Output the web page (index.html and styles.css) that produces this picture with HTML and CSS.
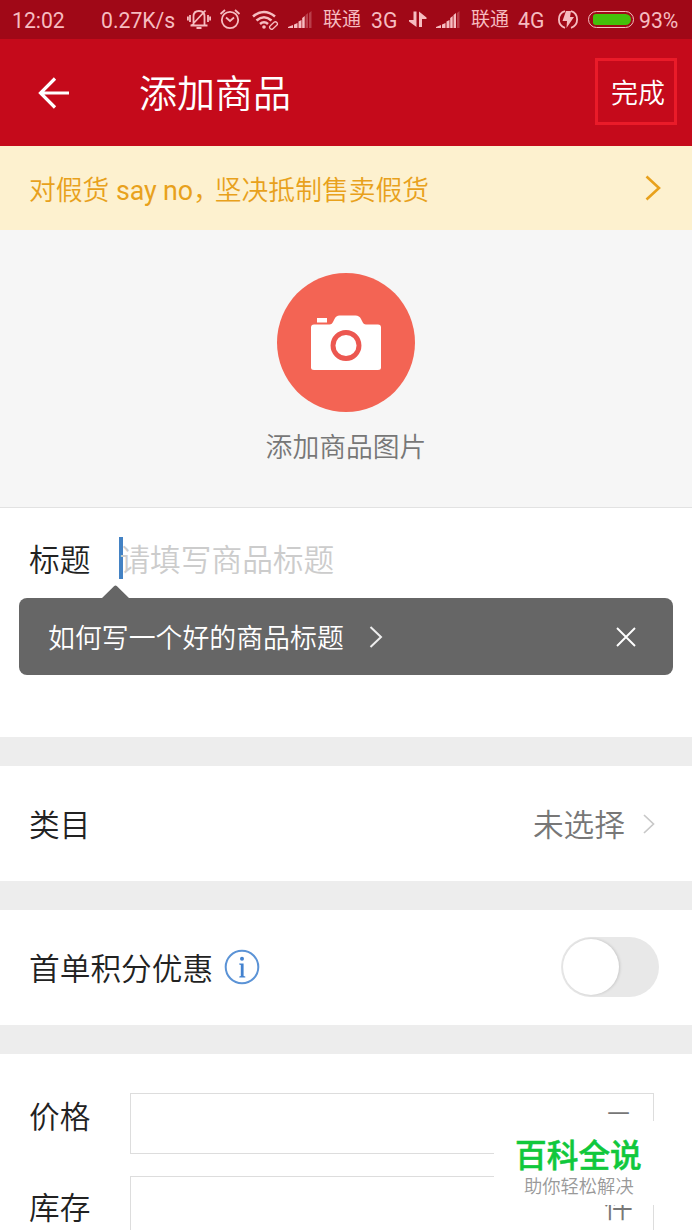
FILE: index.html
```html
<!DOCTYPE html>
<html lang="zh-CN">
<head>
<meta charset="utf-8">
<title>添加商品</title>
<link rel="stylesheet" href="styles.css">
</head>
<body>
<div class="screen">
  <div class="status">
    <span>12:02</span>
    <span class="speed">0.27K/s</span>
    <svg width="24" height="24" viewBox="0 0 24 24" fill="none" stroke="currentColor" stroke-width="1.8"><path d="M3.500 18.500h17M6.500 18V9.500q0-5.500 5.500-5.500t5.500 5.500V18M4.500 18.500 18.500 3.500M9.500 21h5M3 8v7M.9 9.500v4M21 8v7M23.100 9.500v4"/></svg>
    <svg width="22" height="24" viewBox="0 0 22 24" fill="none" stroke="currentColor" stroke-width="1.800"><circle cx="11" cy="13" r="8.200"/><path d="M7 10.500 11 14l4-3.500M1.500 7 6 3M20.500 7 16 3"/></svg>
    <svg width="27" height="24" viewBox="0 0 27 24" fill="none" stroke="currentColor" stroke-width="2.600"><path d="M1 9.500Q12 .500 23 9.500M4.500 13.500q7.500-6.500 15 0M8 17q4-3.500 8 0"/><circle cx="12" cy="20" r="1.800" fill="currentColor" stroke="none"/><rect x="17" y="16.500" width="9" height="4" rx="2" stroke-width="1.300" transform="rotate(-42 21.500 18.500)"/></svg>
    <svg width="25" height="24" viewBox="0 0 25 24" fill="currentColor"><path d="M0 21v-1l5-2v3zM6 17.500 9.500 16v5H6zM10.500 14.500l3-1.500v8h-3zM14.200 11l2.500-2v12h-2.500z"/><path opacity=".3" d="M17.500 8 20 6v15h-2.500zM21 6l2.500-2v17H21z"/></svg>
    <span class="carrier">联通</span>
    <span class="net">3G</span>
    <svg width="18" height="24" viewBox="0 0 18 24" fill="currentColor"><path d="M4.500 4.500h3V20L0 14.500V13h4.500zM10 4.500l7.500 6V12H13v8h-3z"/></svg>
    <svg width="25" height="24" viewBox="0 0 25 24" fill="currentColor"><path d="M0 21v-1l5-2v3zM6 17.500 9.500 16v5H6zM10.500 14.500l3-1.500v8h-3zM14.200 11l2.500-2v12h-2.500zM17.500 8 20 6v15h-2.500z"/><path opacity=".3" d="M21 6l2.500-2v17H21z"/></svg>
    <span class="carrier">联通</span>
    <span class="net">4G</span>
    <svg width="20" height="24" viewBox="0 0 20 24" fill="none" stroke="currentColor" stroke-width="1.800"><path d="M7 4.200a8.700 8.700 0 0 0 0 16.600M13 4.200a8.700 8.700 0 0 1 0 16.600"/><path d="M8 4h5l-1 6h4L8.500 21 9 14H4.500z" fill="currentColor" stroke="none"/></svg>
    <span class="battery"><span class="charge"></span></span>
    <span class="percent">93%</span>
  </div>

  <header class="appbar">
    <svg class="back" width="34" height="34" viewBox="0 0 34 34" fill="none" stroke="#fff" stroke-width="3.200"><path d="M32 17H4M18 2.500 3.500 17 18 31.500"/></svg>
    <h1 class="title">添加商品</h1>
    <button class="done">完成</button>
  </header>

  <div class="banner">
    <span>对假货 <span class="latin">say no</span><span class="comma">，</span>坚决抵制售卖假货</span>
    <svg width="16" height="26" viewBox="0 0 16 26" fill="none" stroke="#e8a11c" stroke-width="2.600"><path d="M1.500 1.500 14 13 1.500 24.500"/></svg>
  </div>

  <section class="photo">
    <div class="camera">
      <svg width="72" height="58" viewBox="0 0 72 58"><rect x="7" y="4" width="10" height="4.500" fill="#fff"/><path fill="#fff" d="M4 10.500h15.500Q22 10.500 23.500 7l1-2q1.500-3.500 5-3.500h16q4 0 5.500 3.500l1 2q1.500 3.500 4 3.500H68q3 0 3 3v40q0 2.500-3 2.500H4q-3 0-3-2.500v-40q0-3 3-3z"/><circle cx="36" cy="31.500" r="13" fill="#fff" stroke="#ec5750" stroke-width="4.900"/></svg>
    </div>
    <p class="caption">添加商品图片</p>
  </section>

  <section class="title-section">
    <div class="title-row"><span class="label">标题</span><span class="field">请填写商品标题</span></div>
    <div class="tip">
      <svg class="pointer" width="30" height="14" viewBox="0 0 30 14"><path fill="#666" d="M0 14 13 1.200q1.500-1.500 3 0L29 14z"/></svg>
      <span>如何写一个好的商品标题</span>
      <svg class="tip-more" width="14" height="22" viewBox="0 0 14 22" fill="none" stroke="#eee" stroke-width="2"><path d="M1.500 1 12 11 1.500 21"/></svg>
      <svg class="close" width="20" height="20" viewBox="0 0 20 20" fill="none" stroke="#fff" stroke-width="1.900"><path d="m1 1 18 18M19 1 1 19"/></svg>
    </div>
  </section>

  <section class="row">
    <span class="label">类目</span>
    <span class="value">未选择</span>
    <svg class="more" width="12" height="20" viewBox="0 0 12 20" fill="none" stroke="#c8c8c8" stroke-width="1.700"><path d="m1 1 9.500 9L1 19"/></svg>
  </section>

  <section class="row discount">
    <span class="label">首单积分优惠</span>
    <svg class="info" width="36" height="36" viewBox="0 0 36 36"><circle cx="18" cy="18" r="16.300" fill="none" stroke="#5b93d6" stroke-width="2"/><circle cx="18" cy="9.800" r="2" fill="#4382cf"/><path fill="#4382cf" d="M15.200 14.500h4.400v12.400l1.700.7v.9h-6v-.9l1.500-.7V16l-1.600-.6z"/></svg>
    <span class="switch"><span class="knob"></span></span>
  </section>

  <section class="form">
    <div class="line"><span class="label">价格</span><div class="input"><span>元</span></div></div>
    <div class="line"><span class="label">库存</span><div class="input"><span>件</span></div></div>
  </section>

  <div class="watermark"><strong>百科全说</strong><span>助你轻松解决</span></div>
</div>
</body>
</html>
```
FILE: styles.css
```css
* { box-sizing: border-box; }
body { margin: 0; background: #ededed; }
.screen {
  position: relative;
  width: 692px;
  height: 1230px;
  overflow: hidden;
  font-family: Roboto, "Noto Sans CJK SC", sans-serif;
  font-weight: 350;
  color: #222;
  white-space: nowrap;
}
.status {
  height: 39px;
  padding-left: 12px;
  display: grid;
  grid-template-columns: 89px 86px 32px 33px 36px 35px 48px 38px 27px 35px 47px 40px 30px 51px 1fr;
  align-items: center;
  background: #a00817;
  color: #f6bcc0;
  font-size: 21.200px;
  font-weight: 400;
}
.status > span:not(.battery) { padding-top: 1px; }
.status svg { display: block; margin-top: -1px; }
.status .carrier { font-size: 19px; line-height: 24px; padding-top: 2px; }
.battery {
  width: 46px;
  height: 17px;
  padding: 2px 2px 2px 4px;
  border: 1.500px solid #f6bcc0;
  border-radius: 9px;
}
.charge { display: block; height: 100%; border-radius: 3px 6px 6px 3px; background: #45c00a; }
.appbar {
  height: 107px;
  padding: 0 15px 0 37px;
  display: flex;
  align-items: center;
  background: #c50a1b;
  color: #fff;
}
.title { margin: 3px 0 0 68px; font-size: 38px; font-weight: 350; line-height: 56px; }
.done {
  width: 82px;
  height: 67px;
  margin: -3px 0 0 auto;
  padding: 1px 0 0 4px;
  border: 3px solid #ea1b29;
  background: none;
  color: #fff;
  font: inherit;
  font-size: 27px;
}
.banner {
  height: 84px;
  padding: 0 31px 0 29px;
  display: flex;
  align-items: center;
  justify-content: space-between;
  background: #fdf1cf;
  color: #e8a11c;
  font-size: 26.800px;
}
.banner svg { margin-top: -1px; }
.latin { font-weight: 400; letter-spacing: -.1px; }
.comma { letter-spacing: -5px; }
.photo {
  height: 278px;
  padding-top: 43px;
  display: flex;
  flex-direction: column;
  align-items: center;
  background: #f6f6f6;
  border-bottom: 1px solid #e2e2e2;
}
.camera {
  width: 138px;
  height: 139px;
  border-radius: 50%;
  background: #f36454;
  display: flex;
  align-items: center;
  justify-content: center;
}
.caption { margin: 16px 0 0; font-size: 26.800px; line-height: 40px; color: #777; }
.title-section { height: 229px; padding: 29px 19px 0; background: #fff; }
.title-row { height: 42px; display: flex; align-items: center; padding-left: 10px; }
.label { padding-top: 5px; font-size: 30.700px; line-height: 44px; }
.field {
  margin-left: 29px;
  height: 42px;
  border-left: 4px solid #4382c4;
  color: #ccc;
  font-size: 30.700px;
  line-height: 47px;
  text-indent: -4px;
}
.tip {
  position: relative;
  height: 77px;
  margin-top: 19px;
  padding: 0 37px 0 29px;
  display: flex;
  align-items: center;
  border-radius: 8px;
  background: #666;
  color: #fff;
  font-size: 26.900px;
}
.pointer { position: absolute; left: 82px; top: -13px; }
.tip-more { margin: 0 0 0 25px; }
.close { margin: 0 0 0 auto; }
.row {
  height: 115px;
  margin-top: 29px;
  padding: 0 37px 0 29px;
  display: flex;
  align-items: center;
  background: #fff;
}
.value { margin: -2px 18px 0 auto; font-size: 30.700px; color: #777; }
.discount { padding-right: 33px; }
.info { margin: -1px 0 0 11px; }
.switch {
  width: 98px;
  height: 60px;
  margin: -1px 0 0 auto;
  padding: 2px;
  border-radius: 30px;
  background: #e8e8e8;
}
.knob {
  display: block;
  width: 56px;
  height: 56px;
  border-radius: 50%;
  background: #fff;
  box-shadow: 1px 0 3px rgba(0, 0, 0, .15);
}
.form {
  height: 200px;
  margin-top: 29px;
  padding: 39px 38px 0 29px;
  display: flex;
  flex-direction: column;
  gap: 22px;
  background: #fff;
}
.line { display: flex; justify-content: space-between; height: 61px; }
.line .label { padding-top: 3px; }
.line + .line .label { padding-top: 11px; }
.input {
  width: 524px;
  height: 61px;
  padding: 0 20px 4px 0;
  display: flex;
  align-items: center;
  justify-content: flex-end;
  border: 1px solid #ddd;
  color: #777;
  font-size: 29px;
}
.watermark {
  position: absolute;
  left: 494px;
  top: 1121px;
  width: 176px;
  height: 84px;
  padding: 15px 0 0 21px;
  background: #fff;
  color: #999;
  font-size: 18.300px;
}
.watermark strong { display: block; font-size: 31.700px; line-height: 42px; color: #10c83c; font-weight: 500; -webkit-text-stroke: .5px #10c83c; }
.watermark span { display: block; padding-left: 9px; line-height: 17px; font-weight: 350; }
```
